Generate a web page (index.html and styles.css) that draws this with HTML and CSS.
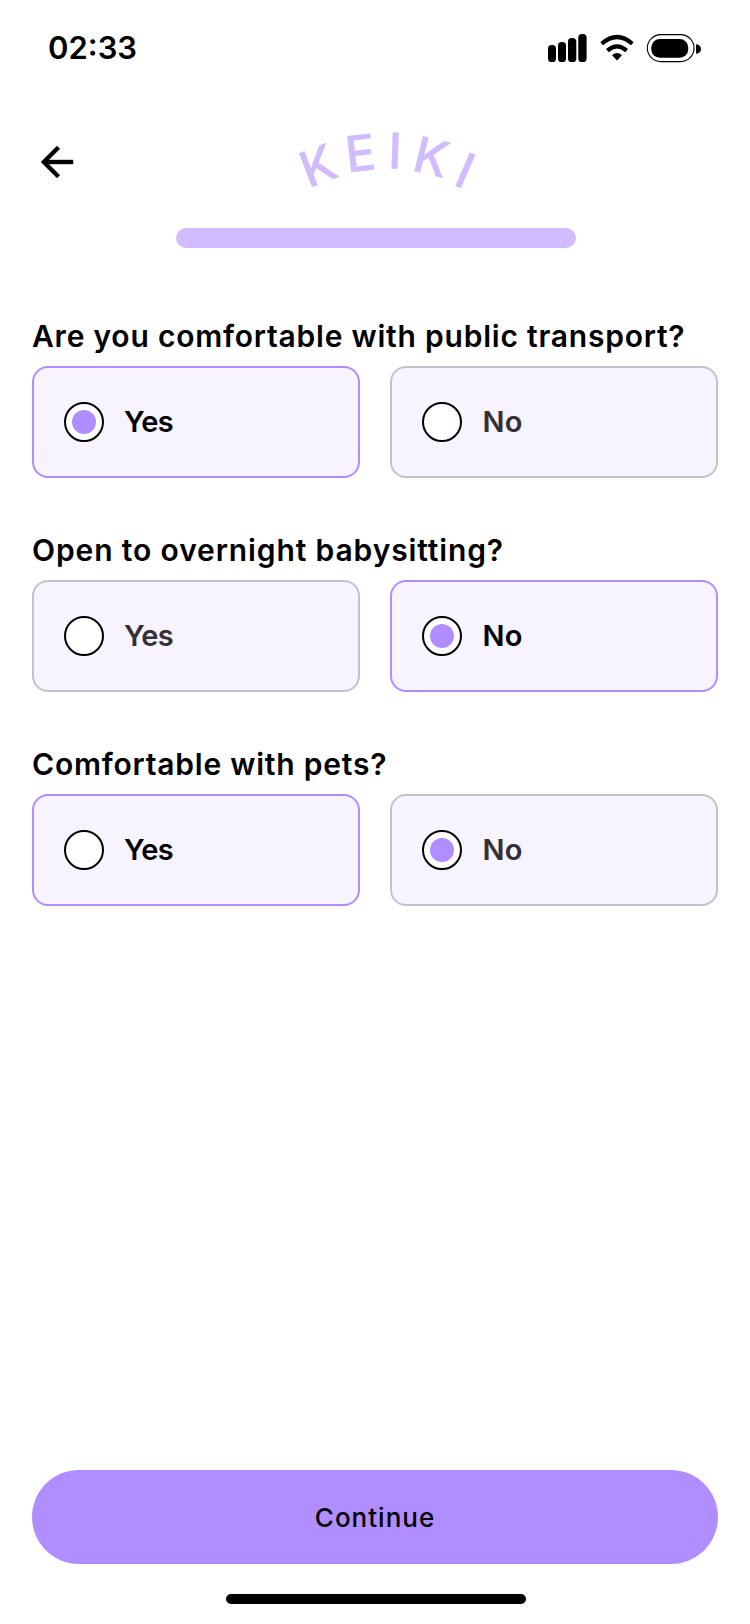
FILE: index.html
```html
<!DOCTYPE html>
<html lang="en">
<head>
<meta charset="utf-8">
<title>Keiki</title>
<link rel="stylesheet" href="styles.css">
</head>
<body>
<div class="screen">
  <div class="status">
    <span class="time">02:33</span>
    <svg class="status-icons" width="154" height="30" viewBox="548 33 154 30">
      <rect x="548" y="45" width="8" height="17" rx="3.6"/>
      <rect x="558" y="42" width="8" height="20" rx="3.6"/>
      <rect x="568" y="38" width="8.3" height="24" rx="3.6"/>
      <rect x="578.3" y="34" width="8.3" height="28" rx="3.6"/>
      <path class="wave" d="M601.7 43.8Q617 30.2 632.3 43.8M607.4 50.6Q617 42.2 626.6 50.6"/>
      <path d="M612 55.2Q617 51 622 55.2L617 60.4Z"/>
      <rect class="shell" x="647.3" y="34.6" width="46.8" height="27" rx="13.5"/>
      <rect x="651.3" y="39" width="36.9" height="18.7" rx="8.5"/>
      <path d="M696 44.2Q701 45 701 49Q701 53 696 53.8Z"/>
    </svg>
  </div>
  <header class="header">
    <svg class="back" width="48" height="48" viewBox="0 0 24 24"><path d="M20 11H7.83l5.59-5.59L12 4l-8 8 8 8 1.41-1.41L7.83 13H20v-2z"/></svg>
    <svg class="logo" width="200" height="76" viewBox="290 122 200 76">
      <text x="308.4 347.6 387.8 410.8 451.9" y="188.6 172.6 168.6 170.3 184.2" rotate="-21 -6.5 2 13.4 23.5">KEIKI</text>
    </svg>
  </header>
  <div class="progress"></div>
  <main class="form">
    <section class="question">
      <h2 class="title">Are you comfortable with public transport?</h2>
      <div class="options">
        <div class="option active"><span class="radio on"></span><span class="label yes">Yes</span></div>
        <div class="option"><span class="radio"></span><span class="label no">No</span></div>
      </div>
    </section>
    <section class="question">
      <h2 class="title wide">Open to overnight babysitting?</h2>
      <div class="options">
        <div class="option"><span class="radio"></span><span class="label yes">Yes</span></div>
        <div class="option active"><span class="radio on"></span><span class="label no">No</span></div>
      </div>
    </section>
    <section class="question">
      <h2 class="title">Comfortable with pets?</h2>
      <div class="options">
        <div class="option active"><span class="radio"></span><span class="label yes">Yes</span></div>
        <div class="option"><span class="radio on"></span><span class="label no">No</span></div>
      </div>
    </section>
  </main>
  <footer class="footer">
    <div class="continue">Continue</div>
    <div class="home"></div>
  </footer>
</div>
</body>
</html>
```
FILE: styles.css
```css
* { box-sizing: border-box; }
body { margin: 0; background: #fff; color: #000; font-family: Inter, "Liberation Sans", sans-serif; }
.screen { height: 1624px; display: flex; flex-direction: column; }
.status { height: 96px; padding: 0 48px; display: flex; align-items: center; justify-content: space-between; }
.time { font-size: 31px; font-weight: 600; line-height: 38px; margin-top: -1px; }
.status-icons { display: block; }
.wave { fill: none; stroke: #000; stroke-width: 4.2; }
.shell { fill: none; stroke: #000; stroke-width: 1.1; }
.header { height: 132px; padding: 26px 33px 0; display: flex; align-items: flex-start; }
.back { margin-top: 16px; overflow: visible; stroke: #000; stroke-width: 0.2; }
.logo { margin-left: 209px; overflow: visible; }
.logo text { fill: #d0bcff; stroke: #d0bcff; stroke-width: 0.4; font-size: 49.5px; font-weight: 500; }
.progress { width: 400px; height: 20px; margin-left: 176px; border-radius: 10px; background: #d0bcff; flex: none; }
.form { flex: 1; padding: 68px 32px 0; display: flex; flex-direction: column; gap: 52px; }
.question { height: 162px; }
.title { margin: 0; height: 50px; line-height: 40px; font-size: 30px; font-weight: 600; letter-spacing: 0.78px; white-space: nowrap; }
.title.wide { letter-spacing: 0.88px; }
.options { display: grid; grid-template-columns: 1fr 1fr; gap: 30px; }
.option { height: 112px; padding-left: 30px; display: flex; align-items: center; gap: 20px; border: 2px solid #c5c1cc; border-radius: 16px; background: #f7f3ff; color: #323036; }
.option.active { border-color: #b08eff; color: #000; }
.radio { width: 40px; height: 40px; display: flex; align-items: center; justify-content: center; border: 2px solid #000; border-radius: 50%; background: #fff; }
.radio.on::after { content: ""; width: 24px; height: 24px; border-radius: 50%; background: #b08eff; }
.label { font-size: 29px; font-weight: 600; line-height: 40px; }
.yes { letter-spacing: -0.6px; }
.no { letter-spacing: 0.3px; padding-left: 0.5px; }
.footer { height: 154px; padding: 0 32px; display: flex; flex-direction: column; align-items: center; }
.continue { width: 100%; height: 94px; display: flex; align-items: center; justify-content: center; border-radius: 47px; background: #b08eff; font-size: 26px; font-weight: 500; letter-spacing: 1px; }
.home { width: 300px; height: 10px; margin: 30px 0 0 2px; border-radius: 5px; background: #000; }
```
